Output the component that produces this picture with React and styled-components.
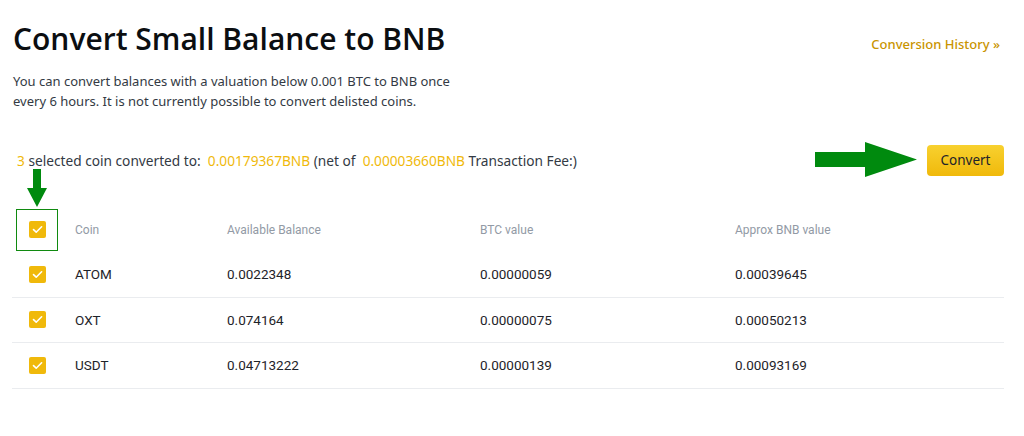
import React from "react";
import styled, { createGlobalStyle } from "styled-components";

const Global = createGlobalStyle`
  html, body { margin: 0; padding: 0; background: #fff; }
  body { font-family: "Noto Sans", "Open Sans", sans-serif; color: #1e2329; }
  * { box-sizing: border-box; }
`;

const Page = styled.div`
  position: relative;
  width: 1024px;
  height: 436px;
  padding: 0 20px 0 12px;
  overflow: hidden;
`;

const Header = styled.div`
  display: flex;
  justify-content: space-between;
  align-items: flex-start;
  padding-top: 19px;
`;

const Title = styled.h1`
  margin: 0 0 0 1px;
  font-family: "Open Sans", sans-serif;
  font-size: 30px;
  line-height: 40px;
  font-weight: 600;
  color: #0b0e11;
  letter-spacing: 0px;
`;

const HistoryLink = styled.a`
  margin-top: 15px;
  margin-right: 4px;
  font-size: 13px;
  line-height: 20px;
  color: #c99400;
  text-decoration: none;
  font-weight: 500;
`;

const Intro = styled.p`
  margin: 12px 0 0 1px;
  width: 450px;
  font-size: 13px;
  line-height: 20px;
  color: #333a44;
`;

const SummaryRow = styled.div`
  display: flex;
  align-items: center;
  margin-top: 34px;
  height: 30px;
`;

const Summary = styled.div`
  flex: 1;
  padding-left: 5px;
  font-size: 13.7px;
  color: #333a44;
  white-space: pre;
`;

const Gold = styled.span`
  color: #f0b90b;
`;

const ArrowRight = styled.svg`
  display: block;
  margin-right: 10px;
`;

const ConvertButton = styled.button`
  width: 77px;
  height: 31px;
  border: none;
  border-radius: 4px;
  background: linear-gradient(180deg, #f8d12f 0%, #f0b90b 100%);
  color: #1e2329;
  font-family: "Noto Sans", sans-serif;
  font-size: 13.5px;
  font-weight: 400;
  padding: 0;
`;

const Table = styled.div`
  margin-top: 32px;
`;

const Row = styled.div`
  display: grid;
  grid-template-columns: 63px 152px 253px 255px 1fr;
  align-items: center;
  height: ${(p) => (p.$head ? "45px" : "45.5px")};
  border-bottom: ${(p) => (p.$head ? "none" : "1px solid #eaecef")};
`;

const Cell = styled.div`
  font-family: "Roboto", sans-serif;
  font-size: ${(p) => (p.$head ? "12px" : "13.5px")};
  color: ${(p) => (p.$head ? "#929aa5" : "#1e2329")};
`;

const CheckCell = styled.div`
  display: flex;
  align-items: center;
  justify-content: center;
  width: 42px;
  height: 42px;
  margin-left: 4px;
  border: ${(p) => (p.$marked ? "1.5px solid #108a10" : "none")};
`;

const Box = styled.span`
  display: flex;
  align-items: center;
  justify-content: center;
  width: 17px;
  height: 17px;
  border-radius: 2px;
  background: #f0b90b;
`;

const ArrowDown = styled.svg`
  position: absolute;
  left: 27px;
  top: 169px;
`;

const Check = () => (
  <Box>
    <svg width="11" height="9" viewBox="0 0 11 9">
      <path d="M1.5 4.6 L4.2 7.2 L9.6 1.8" fill="none" stroke="#fff" strokeWidth="1.6" strokeLinecap="round" strokeLinejoin="round" />
    </svg>
  </Box>
);

const rows = [
  ["ATOM", "0.0022348", "0.00000059", "0.00039645"],
  ["OXT", "0.074164", "0.00000075", "0.00050213"],
  ["USDT", "0.04713222", "0.00000139", "0.00093169"],
];

export default function App() {
  return (
    <Page>
      <Global />
      <Header>
        <Title>Convert Small Balance to BNB</Title>
        <HistoryLink href="#">Conversion History »</HistoryLink>
      </Header>
      <Intro>
        You can convert balances with a valuation below 0.001 BTC to BNB once every 6 hours. It is not currently possible to convert delisted coins.
      </Intro>
      <SummaryRow>
        <Summary>
          <Gold>3</Gold> selected coin converted to:  <Gold>0.00179367BNB</Gold> (net of  <Gold>0.00003660BNB</Gold> Transaction Fee:)
        </Summary>
        <ArrowRight width="102" height="36" viewBox="0 0 102 36">
          <polygon points="0,10 50,10 50,0 102,17.5 50,35 50,25 0,25" fill="#008a0e" />
        </ArrowRight>
        <ConvertButton>Convert</ConvertButton>
      </SummaryRow>
      <ArrowDown width="20" height="38" viewBox="0 0 20 38">
        <polygon points="6,0 14,0 14,19 20,19 10,38 0,19 6,19" fill="#008a0e" />
      </ArrowDown>
      <Table>
        <Row $head>
          <CheckCell $marked>
            <Check />
          </CheckCell>
          <Cell $head>Coin</Cell>
          <Cell $head>Available Balance</Cell>
          <Cell $head>BTC value</Cell>
          <Cell $head>Approx BNB value</Cell>
        </Row>
        {rows.map((r) => (
          <Row key={r[0]}>
            <CheckCell>
              <Check />
            </CheckCell>
            {r.map((v, i) => (
              <Cell key={i}>{v}</Cell>
            ))}
          </Row>
        ))}
      </Table>
    </Page>
  );
}
